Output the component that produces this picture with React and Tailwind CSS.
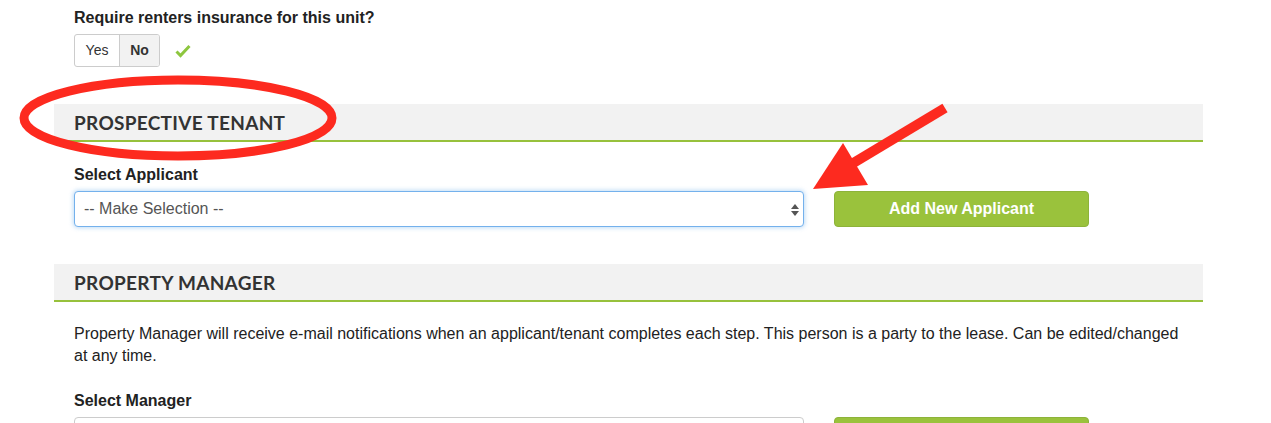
import React from 'react';

const SectionHeader = ({ title }) => (
  <div className="bg-[#f2f2f2] border-b-2 border-[#97c13c] h-[38px] flex items-center px-5">
    <h2 className="font-['Lato',sans-serif] font-bold text-[19px] text-[#333] tracking-[0.3px] leading-none">
      {title}
    </h2>
  </div>
);

const SelectBox = ({ focused }) => (
  <div
    className={
      focused
        ? 'relative w-[730px] h-[36px] rounded-[4px] border border-[#74b1ec] shadow-[0_0_4px_1px_rgba(116,177,236,0.45)] bg-white flex items-center pl-[9px]'
        : 'relative w-[730px] h-[36px] rounded-[4px] border border-[#ccc] bg-white flex items-center pl-[9px]'
    }
  >
    <span className="text-[16px] text-[#555]">-- Make Selection --</span>
    <svg className="absolute right-[3px] top-[11px]" width="10" height="14" viewBox="0 0 10 14">
      <path d="M5 1 L9 6 L1 6 Z" fill="#555" />
      <path d="M5 13 L9 8 L1 8 Z" fill="#555" />
    </svg>
  </div>
);

const GreenButton = ({ label }) => (
  <button className="w-[255px] h-[36px] rounded-[4px] bg-[#9ac23c] border border-[#8db33a] text-white font-bold text-[16px]">
    {label}
  </button>
);

export default function App() {
  return (
    <div className="relative w-[1271px] h-[423px] overflow-hidden bg-white font-['Liberation_Sans',Arial,sans-serif] text-[#222]">
      <div className="w-[1149px] ml-[54px]">
        <div className="px-5 pt-[9px]">
          <p className="font-bold text-[16px] leading-[18px]">Require renters insurance for this unit?</p>
          <div className="flex items-center mt-[7px]">
            <div className="flex h-[33px] border border-[#ccc] rounded-[3px] overflow-hidden text-[14px]">
              <span className="w-[44px] flex items-center justify-center text-[#333]">Yes</span>
              <span className="w-[40px] flex items-center justify-center font-bold bg-[#f2f2f2] border-l border-[#ccc] text-[#333]">
                No
              </span>
            </div>
            <svg className="ml-[15px]" width="16" height="14" viewBox="0 0 16 14">
              <path d="M1.5 7.5 L5.5 11.5 L14.5 2" stroke="#8dc63f" strokeWidth="3" fill="none" />
            </svg>
          </div>
        </div>

        <div className="mt-[37px]">
          <SectionHeader title="PROSPECTIVE TENANT" />
        </div>
        <div className="px-5 pt-[24px]">
          <p className="font-bold text-[16px] leading-[18px]">Select Applicant</p>
          <div className="flex items-center gap-[30px] mt-[7px]">
            <SelectBox focused />
            <GreenButton label="Add New Applicant" />
          </div>
        </div>

        <div className="mt-[37px]">
          <SectionHeader title="PROPERTY MANAGER" />
        </div>
        <div className="px-5 pt-[21px]">
          <p className="text-[16px] leading-[22px]">
            Property Manager will receive e-mail notifications when an applicant/tenant completes each step. This person is a
            party to the lease. Can be edited/changed at any time.
          </p>
          <p className="font-bold text-[16px] leading-[18px] mt-[25px]">Select Manager</p>
          <div className="flex items-center gap-[30px] mt-[7px]">
            <SelectBox />
            <GreenButton label="Add New Manager" />
          </div>
        </div>
      </div>

      {/* annotations */}
      <svg className="absolute left-0 top-0 pointer-events-none" width="1271" height="423">
        <ellipse cx="178" cy="118" rx="154" ry="38" stroke="#fd2a1f" strokeWidth="9" fill="none" />
        <line x1="945" y1="108" x2="850" y2="165" stroke="#fd2a1f" strokeWidth="10" />
        <path d="M813 189 L843 143 L868 185 Z" fill="#fd2a1f" />
      </svg>
    </div>
  );
}
